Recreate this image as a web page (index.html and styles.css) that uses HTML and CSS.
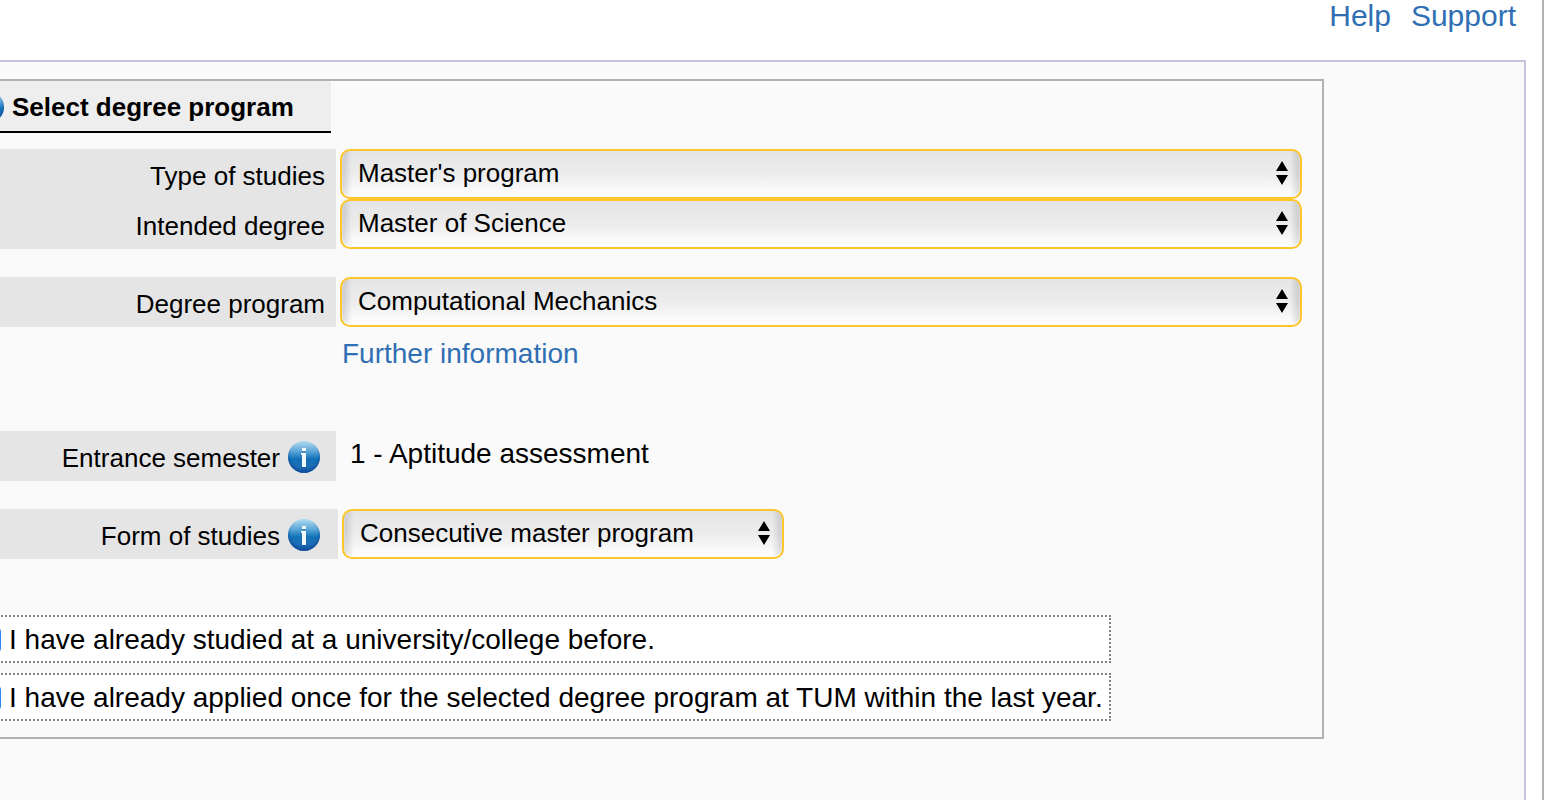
FILE: index.html
```html
<!DOCTYPE html>
<html lang="en">
<head>
  <meta charset="utf-8">
  <meta name="viewport" content="width=device-width, initial-scale=1">
  <title>Select degree program</title>
  <link rel="stylesheet" href="styles.css">
</head>
<body>
  <svg class="defs" aria-hidden="true">
    <defs>
      <linearGradient id="ball" x1="0" y1="0" x2="0" y2="1">
        <stop offset="0" stop-color="#b0daef"/>
        <stop offset=".3" stop-color="#62aada"/>
        <stop offset=".48" stop-color="#2a84c4"/>
        <stop offset=".56" stop-color="#1272b8"/>
        <stop offset=".75" stop-color="#1c70b8"/>
        <stop offset="1" stop-color="#1a5fae"/>
      </linearGradient>
      <radialGradient id="rim" cx=".5" cy=".42" r=".6">
        <stop offset=".7" stop-color="#0b3f8c" stop-opacity="0"/>
        <stop offset="1" stop-color="#0b3f8c" stop-opacity=".75"/>
      </radialGradient>
      <symbol id="info" viewBox="0 0 32 32">
        <circle cx="16" cy="16" r="16" fill="url(#ball)"/>
        <circle cx="16" cy="16" r="16" fill="url(#rim)"/>
        <path d="M14 7h4v4h-4zM12 13h6v12h1v2h-6v-2h1V15h-2z" fill="#0d4792" opacity=".35"/>
        <path d="M14 7h4v3h-4zM13 12h5v14h-4V14h-1z" fill="#f4f9fd"/>
      </symbol>
    </defs>
  </svg>

  <div class="page">
    <nav class="topnav">
      <a href="#">Help</a>
      <a href="#">Support</a>
    </nav>

    <main class="content">
      <form class="panel">
        <h1 class="title"><svg class="info"><use href="#info"/></svg>Select degree program</h1>

        <div class="row">
          <label class="label" for="type">Type of studies</label>
          <select class="select" id="type"><option>Master's program</option></select>
        </div>
        <div class="row">
          <label class="label" for="degree">Intended degree</label>
          <select class="select" id="degree"><option>Master of Science</option></select>
        </div>
        <div class="row spaced">
          <label class="label" for="program">Degree program</label>
          <select class="select" id="program"><option>Computational Mechanics</option></select>
        </div>
        <a class="more" href="#">Further information</a>

        <div class="row semester">
          <span class="label">Entrance semester<svg class="info"><use href="#info"/></svg></span>
          <span class="value">1 - Aptitude assessment</span>
        </div>
        <div class="row spaced wide">
          <label class="label" for="form">Form of studies<svg class="info"><use href="#info"/></svg></label>
          <select class="select short" id="form"><option>Consecutive master program</option></select>
        </div>

        <div class="checks">
          <label class="check"><input type="checkbox" checked>I have already studied at a university/college before.</label>
          <label class="check"><input type="checkbox" checked>I have already applied once for the selected degree program at TUM within the last year.</label>
        </div>
      </form>
    </main>
  </div>
</body>
</html>
```

FILE: styles.css
```css
*{box-sizing:border-box}
body{margin:0;background:#fff;color:#000;font-family:"Liberation Sans",Arial,sans-serif;font-size:26px;overflow-x:hidden}
a{color:#306fb3;text-decoration:none}
.defs{position:absolute;width:0;height:0}

/* the left edge of the page runs out of the window */
.page{display:flex;flex-direction:column;min-height:100vh;margin:0 2px 0 -40px;border-right:2px solid #b2b2b2}
.topnav{display:flex;justify-content:flex-end;gap:20px;height:60px;padding-right:26px;font-size:30px;line-height:32px}
.content{flex:1;margin-right:16px;padding:17px 200px 17px 0;background:#fafafa;border:2px solid #c5c5dc;border-bottom:0}
.panel{padding:0 20px 16px 0;border:2px solid #b2b2b2}

.title{display:flex;align-items:center;gap:8px;width:367px;height:52px;margin:0 0 16px;padding:2px 0 0 8px;background:#eee;border-bottom:2px solid #000;font-size:26px;line-height:30px}
.info{width:32px;height:32px;flex:none}

.row{display:flex;gap:4px}
.spaced{margin-top:28px}
.label{display:flex;flex:none;align-items:center;justify-content:flex-end;gap:8px;width:372px;height:50px;padding:4px 11px 0 0;background:#e5e5e5;line-height:30px}
.label .info{margin:-2px 5px 0 0}
.wide .label{width:374px;padding-right:13px}
.value{padding:7px 0 0 10px;font-size:28px;line-height:32px}
.select{
  flex:1;min-width:0;height:50px;margin:0;padding:0 40px 2px 16px;
  appearance:none;border:2px solid #ffc62b;border-radius:10px;color:#000;
  font-family:inherit;font-size:26px;
  background:
    url("data:image/svg+xml,%3Csvg xmlns='http://www.w3.org/2000/svg' width='12' height='24'%3E%3Cpath d='M0 10L6 0L12 10zM0 14L6 24L12 14z'/%3E%3C/svg%3E") no-repeat right 12px top 10px,
    linear-gradient(to right,rgba(0,0,0,.14),transparent) no-repeat left/10px 100%,
    linear-gradient(to left,rgba(0,0,0,.14),transparent) no-repeat right/10px 100%,
    linear-gradient(#e5e5e5,#ececec 50%,#fff);
  box-shadow:inset 0 -1px 2px rgba(255,255,255,.9);
}
.select.short{flex:0 1 442px}
.more{display:block;width:max-content;margin:11px 0 0 378px;font-size:28px;line-height:32px}
.semester{margin-top:61px}

.checks{display:flex;flex-direction:column;gap:10px;width:max-content;margin-top:56px}
.check{display:flex;align-items:center;gap:8px;height:48px;padding:1px 6px 0 8px;background:#fff;border:2px dotted #808080;font-size:28px;line-height:32px}
.check input{appearance:none;width:27px;height:28px;margin:0;background:#2f86f6;border-radius:6px}
```
